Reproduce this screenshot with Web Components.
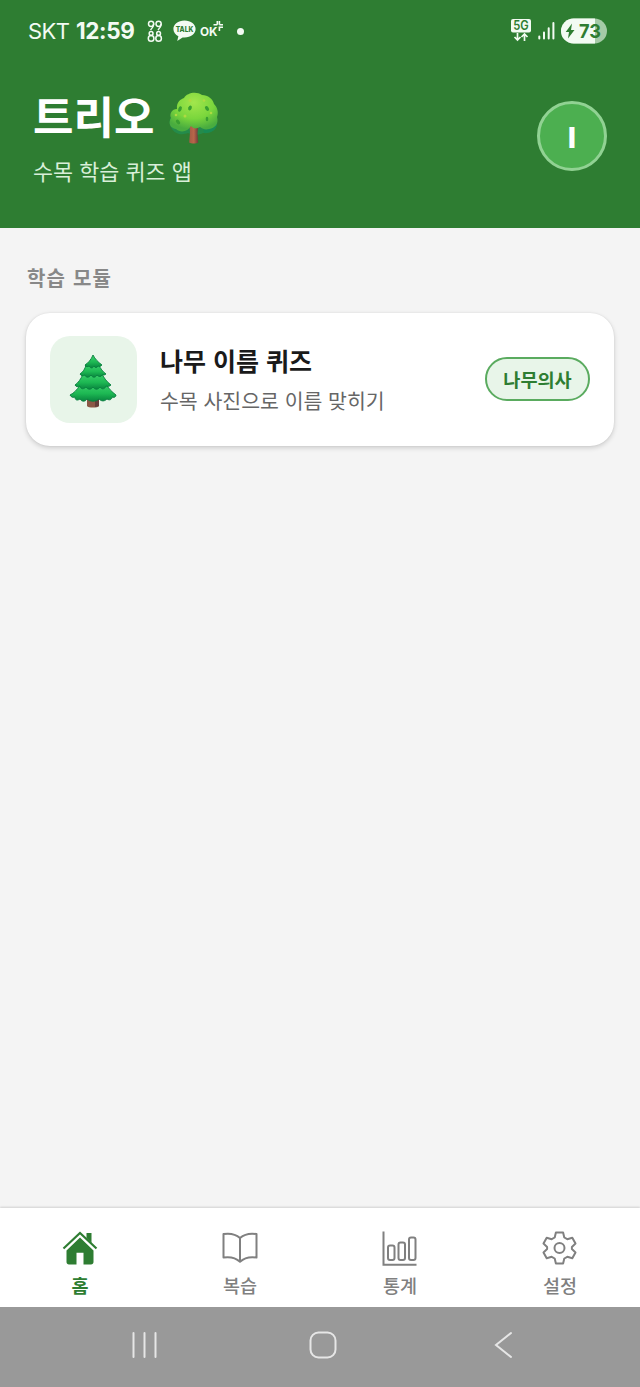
<!DOCTYPE html>
<html lang="ko">
<head>
<meta charset="utf-8">
<title>트리오</title>
<style>
html,body{margin:0;height:100%}
body{font-family:"Noto Sans CJK KR","Noto Sans",sans-serif;background:#f4f4f4;overflow:hidden}
</style>
</head>
<body>
<trio-app></trio-app>
<script>
const define = (name, html) => customElements.define(name, class extends HTMLElement {
  constructor() {
    super();
    const t = document.createElement('template');
    t.innerHTML = html;
    this.attachShadow({mode: 'open'}).append(t.content.cloneNode(true));
  }
});

define('status-bar', `
<style>
:host{display:flex;height:62px;box-sizing:border-box;padding:0 33px 0 28px;align-items:center;color:#f3fbf3;font-family:Inter,sans-serif;line-height:24px}
.carrier{font-size:22px;letter-spacing:-.6px;width:48px;white-space:nowrap}
.time{font-size:22.500px;font-weight:650;width:59px;letter-spacing:-.4px;white-space:nowrap}
svg{display:block;flex:none}
.n{margin-left:12px}.talk{margin-left:10px}.ok{margin-left:4px}.dot{width:7px;height:7px;border-radius:50%;background:currentColor;margin-left:13px}
.right{margin-left:auto;display:flex;align-items:center}
</style>
<span class="carrier">SKT</span><span class="time">12:59</span>
<svg class="n" width="16" height="24" viewBox="0 0 16 24" fill="none" stroke="currentColor" stroke-width="1.500"><circle cx="4.100" cy="4.800" r="2.600"/><circle cx="11.600" cy="4.800" r="2.600"/><path d="M6.700 4.800C6.700 7.500 5.500 9 3.500 11M14.200 4.800C14.200 7.500 13 9 11 11"/><circle cx="4.100" cy="14.500" r="1.900"/><circle cx="4.100" cy="19.400" r="2.800"/><circle cx="11.600" cy="14.500" r="1.900"/><circle cx="11.600" cy="19.400" r="2.800"/></svg>
<svg class="talk" width="23" height="24" viewBox="0 0 23 24"><path fill="currentColor" d="M11.500 1.500C5 1.500.4 5.200.4 10c0 3.200 2 5.900 5 7.300L4.200 22l5.400-3.600 1.900.1c6.500 0 11.100-3.700 11.100-8.500S18 1.500 11.500 1.500z"/><text x="11.500" y="13" text-anchor="middle" font-family="Inter,sans-serif" font-weight="800" font-size="7.800" textLength="17.500" lengthAdjust="spacingAndGlyphs" fill="#2e7d32">TALK</text></svg>
<svg class="ok" width="24" height="24" viewBox="0 0 24 24"><text x="0" y="16.500" font-family="Inter,sans-serif" font-weight="700" font-size="12" textLength="17.500" lengthAdjust="spacingAndGlyphs" fill="currentColor">OK</text><path d="M13.500 5.700h3.800M17.300 5.700V2M23 5.700h-3.600M19.400 5.700V2M19.400 12V8.300H23" fill="none" stroke="currentColor" stroke-width="1.600"/></svg>
<span class="dot"></span>
<div class="right">
<svg width="20" height="24" viewBox="0 0 20 24"><rect width="20" height="13.500" rx="2" fill="currentColor"/><text x="10" y="11.300" text-anchor="middle" font-family="Inter,sans-serif" font-size="12.500" font-weight="600" fill="#2e7d32" textLength="15.500" lengthAdjust="spacingAndGlyphs">5G</text><path d="M6.500 14v7M3.500 18l3 3 3-3M13.500 22v-7M10.500 18l3-3 3 3" fill="none" stroke="currentColor" stroke-width="1.700"/></svg>
<svg style="margin:0 0 0 7px" width="17" height="18" viewBox="0 0 17 18" stroke="currentColor" stroke-width="2" stroke-linecap="round"><path d="M1.300 14.500v2M6 10.500v6M10.700 6.300v10.200M15.400 1v15.500"/></svg>
<svg style="margin:-1px 0 0 6px" width="46" height="26" viewBox="0 0 46 26"><defs><clipPath id="c"><rect width="46" height="25" y=".5" rx="12.500"/></clipPath></defs><g clip-path="url(#c)"><rect width="47" height="26" fill="#a5cba7"/><rect width="34" height="26" fill="#f3fbf3"/></g><path d="M11 5.500L4.700 14H8l-1 6.500L13.500 12H10z" fill="#2e7d32"/><text x="18" y="19.800" font-family="Inter,sans-serif" font-size="19.300" font-weight="650" fill="#2e7d32" textLength="22" lengthAdjust="spacingAndGlyphs">73</text></svg>
</div>`);

define('oak-tree', `
<style>:host{display:block}svg{display:block}</style>
<svg width="52" height="54" viewBox="0 0 52 54"><defs><radialGradient id="a" cx=".5" cy=".25" r=".7"><stop stop-color="#a2e64c"/><stop offset=".6" stop-color="#7ad63c"/><stop offset="1" stop-color="#49ac3f"/></radialGradient><linearGradient id="w"><stop stop-color="#a25b44"/><stop offset=".5" stop-color="#b9664a"/><stop offset="1" stop-color="#683839"/></linearGradient></defs>
<path d="M8 22C1 23 0 33 4 38c4 6 11 6 16 4 5 3 12 2 15 0 8 1 14-3 14-10l-3-10z" fill="#248b4b"/>
<path d="M36 42c8 0 13-4 13-10l-6 2-8 2z" fill="#198b55"/>
<path d="M21.500 34h9l-1 8 .7 9.500c-2 1.300-7 1.300-9 0l.8-10z" fill="url(#w)"/>
<path d="M9 18C8 11 13 8 16 7c3-5 12-7 18-3 6 0 11 4 12 9 3 3 5 8 3 13 2 7-2 11-8 12-4 1-6 0-9-2-3 2-7 2-9-1-3 6-11 7-15 3-6-1-8-6-5-11-2-4 1-9 6-9z" fill="url(#a)"/>
<g fill="#399f31"><ellipse cx="22" cy="17" rx="1.700" ry="2.500" transform="rotate(25 22 17)"/><ellipse cx="12" cy="18" rx="1.700" ry="2.800" transform="rotate(20 12 18)"/><ellipse cx="39" cy="17.500" rx="1.700" ry="2.600" transform="rotate(-35 39 17.500)"/><ellipse cx="10" cy="31" rx="1.700" ry="2.700" transform="rotate(-40 10 31)"/><ellipse cx="39" cy="28" rx="1.300" ry="2.300"/></g>
<g fill="#aeda42"><circle cx="22" cy="9.500" r="1.500"/><circle cx="36" cy="9.500" r="1.300"/><circle cx="17" cy="25" r="1.500"/><circle cx="8" cy="24" r="1.300"/><circle cx="43" cy="22" r="1.300"/></g></svg>`);

define('pine-tree', `
<style>:host{display:block}svg{display:block}</style>
<svg width="48" height="54" viewBox="0 0 48 54"><defs><linearGradient id="g" x2="0" y2="1"><stop stop-color="#3bd06b"/><stop offset=".55" stop-color="#1db853"/><stop offset="1" stop-color="#08843e"/></linearGradient></defs>
<path d="M18 44h12v8c-1 2-11 2-12 0z" fill="#8b5746"/><path d="M26 44h4v8l-4 1z" fill="#643e3b"/>
<g fill="url(#g)" stroke="#087e3e" stroke-width=".9" stroke-linejoin="round">
<path d="M11 31C8 36 5 39 1 41c1 2 3 3 5 2 0 3 2 4 5 2 2 3 5 3 7 0 3 3 9 3 12 0 3 3 6 2 8 0 3 2 5 0 5-2 2 1 4 0 4-2-4-3-8-7-10-11z"/>
<path d="M14 20c-2 5-5 9-8 11 1 2 3 2 5 1 1 4 4 3 6 1 2 3 5 3 7 0 2 3 5 3 7 0 2 3 5 2 6-1 2 1 4 0 5-1-4-3-7-7-9-11z"/>
<path d="M17 11c-1 4-3 7-6 9 1 2 3 2 5 1 1 3 4 3 6 0 2 3 4 3 6 0 2 2 4 2 5 0 2 0 3 0 4-1-3-2-6-6-7-9z"/>
<path d="M24 1c-2 5-5 8-8 10 1 2 3 2 4 1 2 3 4 2 5 0 1 2 3 2 4 0 2 1 3 0 4-1-4-3-7-6-9-10z"/></g></svg>`);

define('user-avatar', `
<style>:host{display:flex;box-sizing:border-box;width:70px;height:70px;border:3px solid #91d293;border-radius:50%;background:#4caf50;align-items:center;justify-content:center;color:#fff;font:800 29px Inter,sans-serif;padding-top:2px}</style><slot></slot>`);

define('app-header', `
<style>
:host{display:flex;box-sizing:border-box;height:166px;padding:24px 33px 0 33px;justify-content:space-between;align-items:flex-start;color:#fff}
.row{display:flex;align-items:center;gap:14px;height:62px}
.title{font-weight:700;font-size:44px;line-height:60px;white-space:nowrap;margin-top:-4px}
.sub{font-size:21.800px;line-height:32px;margin-top:7px;color:#d9efd9;white-space:nowrap}
oak-tree{margin-top:1px}
user-avatar{margin-top:15px}
</style>
<div><div class="row"><span class="title"><slot name="title"></slot></span><oak-tree></oak-tree></div><div class="sub"><slot></slot></div></div>
<user-avatar>I</user-avatar>`);

define('module-card', `
<style>
:host{display:flex;box-sizing:border-box;height:133px;padding:0 24px;border-radius:24px;background:#fff;align-items:center;box-shadow:0 2px 5px rgba(0,0,0,.16),0 0 2px rgba(0,0,0,.08)}
.tile{width:87px;height:87px;border-radius:20px;background:#e8f5e9;display:flex;align-items:center;justify-content:center;flex:none}
pine-tree{margin:4px 2px 0 0}
.text{margin:-2px 0 0 23px;flex:1;white-space:nowrap}
.t{font-weight:700;font-size:25px;line-height:38px;color:#1a1a1a}
.s{font-size:20.500px;line-height:30px;margin-top:6px;color:#666}
.tag{box-sizing:border-box;width:105px;height:44px;border:2px solid #5aab5f;border-radius:23px;background:#e8f5e9;color:#2e7d32;font-size:18.600px;font-weight:600;line-height:39px;text-align:center}
</style>
<div class="tile"><pine-tree></pine-tree></div>
<div class="text"><div class="t"><slot name="title"></slot></div><div class="s"><slot></slot></div></div>
<div class="tag"><slot name="tag"></slot></div>`);

define('tab-item', `
<style>:host{display:flex;flex-direction:column;align-items:center;padding:21px 1px 0 0;color:#808080;font-size:18.500px;line-height:26px;font-weight:500}
:host([active]){color:#2e7d32;font-weight:600}
.label{margin:5px -1px 0 0}</style>
<slot name="icon"></slot><span class="label"><slot></slot></span>`);

define('tab-bar', `
<style>
:host{display:grid;grid-template-columns:repeat(4,1fr);height:99px;background:#fff;box-shadow:0 -1px 2px rgba(0,0,0,.15)}
svg{display:block;width:36px;height:38px;fill:none;stroke:currentColor;stroke-width:2}
</style>
<tab-item active>홈<svg slot="icon" viewBox="0 0 36 38"><path d="M24.500 4h5v10l-5-5z" fill="currentColor" stroke="none"/><path d="M1.500 19.500L18 4l16.500 15.500" stroke-width="2.200"/><path d="M18 8.500L4.500 21.500V33c0 1.500 1 2.500 2.500 2.500h7.500V23.800h7v11.700H29c1.500 0 2.500-1 2.500-2.500V21.500z" fill="currentColor" stroke="none"/></svg></tab-item>
<tab-item>복습<svg slot="icon" viewBox="0 0 36 38"><path d="M18 9C13 4.500 6 4.300 1.500 5v23.500C8 27.500 14 29 18 32.800c4-3.800 10-5.300 16.500-4.300V5C30 4.300 23 4.500 18 9zM18 9v23.800" stroke-linejoin="round"/></svg></tab-item>
<tab-item>통계<svg slot="icon" viewBox="0.500 0 36 38"><path d="M2 2.500v33.200h33"/><rect x="6.500" y="16.500" width="6.500" height="14.500" rx="2"/><rect x="17" y="13.500" width="6.500" height="17.500" rx="2"/><rect x="27.500" y="8.500" width="6.500" height="22.500" rx="2"/></svg></tab-item>
<tab-item>설정<svg slot="icon" viewBox="0.500 0 36 38"><path stroke-linejoin="round" d="M14.400 3.500h7.200l1.200 5 3 1.700 5-1.500 3.200 5.900-3.600 3.300v2.200l3.600 3.300-3.200 5.900-5-1.500-3 1.700-1.200 5h-7.200l-1.200-5-3-1.700-5 1.500L2 23.400l3.600-3.300v-2.200L2 14.600l3.200-5.900 5 1.500 3-1.700z"/><circle cx="18" cy="19" r="5"/></svg></tab-item>`);

define('system-nav', `
<style>:host{display:flex;box-sizing:border-box;height:80px;padding:0 127px 4px 130px;background:#999;align-items:center}
svg{display:block;fill:none;stroke:#e6e6e6;stroke-width:2}
.home{margin:0 157px 0 150px}</style>
<svg width="29" height="28" viewBox="0 0 29 28" stroke-linecap="round"><path d="M3.500 2v24M14.500 2v24M25.500 2v24"/></svg>
<svg class="home" width="28" height="28" viewBox="0 0 28 28"><rect x="1.500" y="1.500" width="25" height="25" rx="8"/></svg>
<svg width="19" height="28" viewBox="0 0 19 28" stroke-linecap="round"><path d="M17 2L2 14l15 12"/></svg>`);

define('trio-app', `
<style>
:host{display:flex;flex-direction:column;height:1387px;width:640px;background:#f4f4f4}
.top{background:#2e7d32;height:228px}
main{flex:1;padding:34px 26px 0}
h2{margin:0 0 19.500px 1px;font-size:20px;line-height:31px;font-weight:600;color:#888;letter-spacing:1.200px}
</style>
<div class="top"><status-bar></status-bar><app-header><span slot="title">트리오</span>수목 학습 퀴즈 앱</app-header></div>
<main><h2>학습 모듈</h2>
<module-card><span slot="title">나무 이름 퀴즈</span>수목 사진으로 이름 맞히기<span slot="tag">나무의사</span></module-card></main>
<tab-bar></tab-bar><system-nav></system-nav>`);
</script>
</body>
</html>
